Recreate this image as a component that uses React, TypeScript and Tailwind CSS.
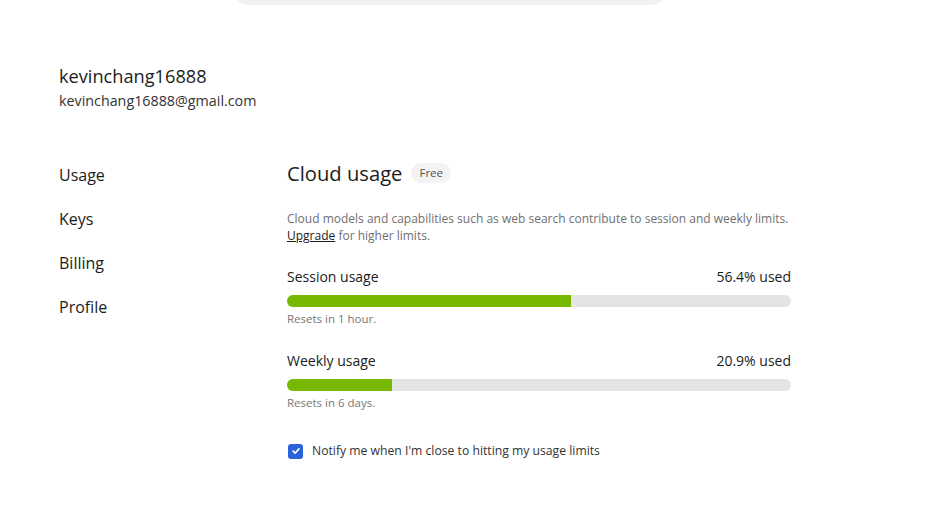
import { useState } from "react";

type Meter = {
    label: string;
    pct: number;
    reset: string;
};

const meters: Meter[] = [
    { label: "Session usage", pct: 56.4, reset: "Resets in 1 hour." },
    { label: "Weekly usage", pct: 20.9, reset: "Resets in 6 days." },
];

const nav = ["Usage", "Keys", "Billing", "Profile"];

function UsageMeter({ m }: { m: Meter }) {
    return (
        <div className="flex flex-col">
            <div className="flex justify-between text-[14px] leading-[20px] text-[#1c1c1c]">
                <span>{m.label}</span>
                <span>{m.pct}% used</span>
            </div>
            <div className="mt-2 h-3 w-full rounded-full bg-[#e4e4e4] overflow-hidden">
                <div className="h-full bg-[#76b900]" style={{ width: `${m.pct}%` }} />
            </div>
            <p className="mt-1 text-[11.5px] leading-[16px] text-[#777]">{m.reset}</p>
        </div>
    );
}

export default function App() {
    const [notify, setNotify] = useState(true);

    return (
        <div className="min-h-screen bg-white font-['Open_Sans',sans-serif] text-[#1c1c1c]">
            {/* search bar peeking in from above */}
            <div className="h-[5px] overflow-hidden flex items-end">
                <div className="ml-[230px] w-[440px] h-[40px] shrink-0 rounded-b-[20px] bg-[#f2f2f2]" />
            </div>

            <div className="pl-[59px] pt-[59px]">
                <h1 className="text-[18.2px] leading-[24px]">kevinchang16888</h1>
                <p className="mt-[3px] text-[14.3px] leading-[20px] text-[#333]">kevinchang16888@gmail.com</p>
            </div>

            <div className="flex pl-[59px] mt-[48px]">
                <nav className="w-[228px] shrink-0 pt-[4px] flex flex-col gap-5">
                    {nav.map((n) => (
                        <a key={n} className="text-[16px] leading-[24px] text-[#1c1c1c] cursor-pointer">{n}</a>
                    ))}
                </nav>

                <main className="w-[504px]">
                    <div className="flex items-center gap-[9px]">
                        <h2 className="text-[20.2px] leading-[28px]">Cloud usage</h2>
                        <span className="px-2 h-5 flex items-center rounded-full bg-[#f3f3f3] text-[11.5px] text-[#555]">Free</span>
                    </div>

                    <p className="mt-[23px] text-[12px] leading-[17px] text-[#707070]">
                        Cloud models and capabilities such as web search contribute to session and weekly limits.
                        <br />
                        <a className="underline text-[#1c1c1c] cursor-pointer">Upgrade</a> for higher limits.
                    </p>

                    <div className="mt-[23px] flex flex-col gap-6">
                        {meters.map((m) => (
                            <UsageMeter key={m.label} m={m} />
                        ))}
                    </div>

                    <label className="mt-[30px] flex items-center gap-[9px] cursor-pointer">
                        <button
                            onClick={() => setNotify(!notify)}
                            className={`ml-[1px] w-[15px] h-[15px] rounded-[3px] flex items-center justify-center ${notify ? "bg-[#2a63d8]" : "border border-[#999] bg-white"}`}
                        >
                            {notify && (
                                <svg viewBox="0 0 12 12" className="w-[10px] h-[10px]" fill="none" stroke="white" strokeWidth="2" strokeLinecap="round" strokeLinejoin="round">
                                    <path d="M2.5 6.2 5 8.5 9.5 3.5" />
                                </svg>
                            )}
                        </button>
                        <span className="text-[12.2px] leading-[20px] text-[#333]">Notify me when I'm close to hitting my usage limits</span>
                    </label>
                </main>
            </div>
        </div>
    );
}
